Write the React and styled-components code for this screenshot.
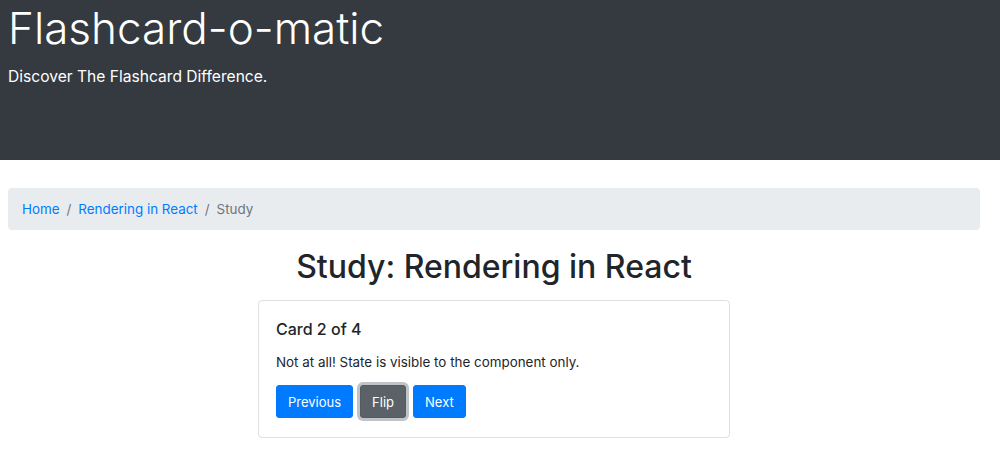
import React from 'react';
import styled, { createGlobalStyle } from 'styled-components';

const GlobalStyle = createGlobalStyle`
  body {
    margin: 0;
    font-family: Inter, "Noto Sans", "Liberation Sans", sans-serif;
    color: #212529;
    background: #fff;
  }
`;

const Header = styled.header`
  background-color: #343a40;
  color: #fff;
  height: 160px;
  padding: 0 8px;
  box-sizing: border-box;
`;

const Title = styled.h1`
  margin: 0;
  padding-top: 2px;
  font-size: 44px;
  font-weight: 300;
  line-height: 52px;
`;

const Tagline = styled.p`
  margin: 11px 0 0;
  font-size: 15.6px;
  line-height: 24px;
`;

const Main = styled.main`
  padding: 28px 20px 0 8px;
`;

const Breadcrumb = styled.nav`
  display: flex;
  align-items: center;
  height: 42px;
  padding: 0 14px;
  background-color: #e9ecef;
  border-radius: 4px;
  font-size: 13.4px;
`;

const Crumb = styled.a`
  color: ${(p) => (p.active ? '#6c757d' : '#007bff')};
  text-decoration: none;
`;

const Sep = styled.span`
  color: #6c757d;
  padding: 0 7px;
`;

const Heading = styled.h2`
  margin: 17px 0 13px;
  text-align: center;
  font-size: 32px;
  font-weight: 500;
  line-height: 40px;
`;

const Card = styled.div`
  width: 472px;
  margin: 0 auto;
  box-sizing: border-box;
  border: 1px solid rgba(0, 0, 0, 0.125);
  border-radius: 4px;
  padding: 17px 17px 19px;
`;

const CardTitle = styled.h5`
  margin: 0 0 12px;
  font-size: 16px;
  font-weight: 500;
  line-height: 22px;
`;

const CardText = styled.p`
  margin: 0 0 13px;
  font-size: 13.4px;
  line-height: 20px;
`;

const Buttons = styled.div`
  display: flex;
  gap: 7px;
`;

const Button = styled.button`
  height: 33px;
  padding: 0 11px;
  border: 1px solid ${(p) => (p.secondary ? '#545b62' : '#007bff')};
  border-radius: 3px;
  background-color: ${(p) => (p.secondary ? '#5a6268' : '#007bff')};
  color: #fff;
  font-family: inherit;
  font-size: 13px;
  box-shadow: ${(p) => (p.focused ? '0 0 0 3px rgba(130, 138, 145, 0.5)' : 'none')};
  cursor: pointer;
`;

const App = () => {
  return (
    <>
      <GlobalStyle />
      <Header>
        <Title>Flashcard-o-matic</Title>
        <Tagline>Discover The Flashcard Difference.</Tagline>
      </Header>
      <Main>
        <Breadcrumb>
          <Crumb href="#">Home</Crumb>
          <Sep>/</Sep>
          <Crumb href="#">Rendering in React</Crumb>
          <Sep>/</Sep>
          <Crumb active>Study</Crumb>
        </Breadcrumb>
        <Heading>Study: Rendering in React</Heading>
        <Card>
          <CardTitle>Card 2 of 4</CardTitle>
          <CardText>Not at all! State is visible to the component only.</CardText>
          <Buttons>
            <Button>Previous</Button>
            <Button secondary focused>Flip</Button>
            <Button>Next</Button>
          </Buttons>
        </Card>
      </Main>
    </>
  );
};

export default App;
